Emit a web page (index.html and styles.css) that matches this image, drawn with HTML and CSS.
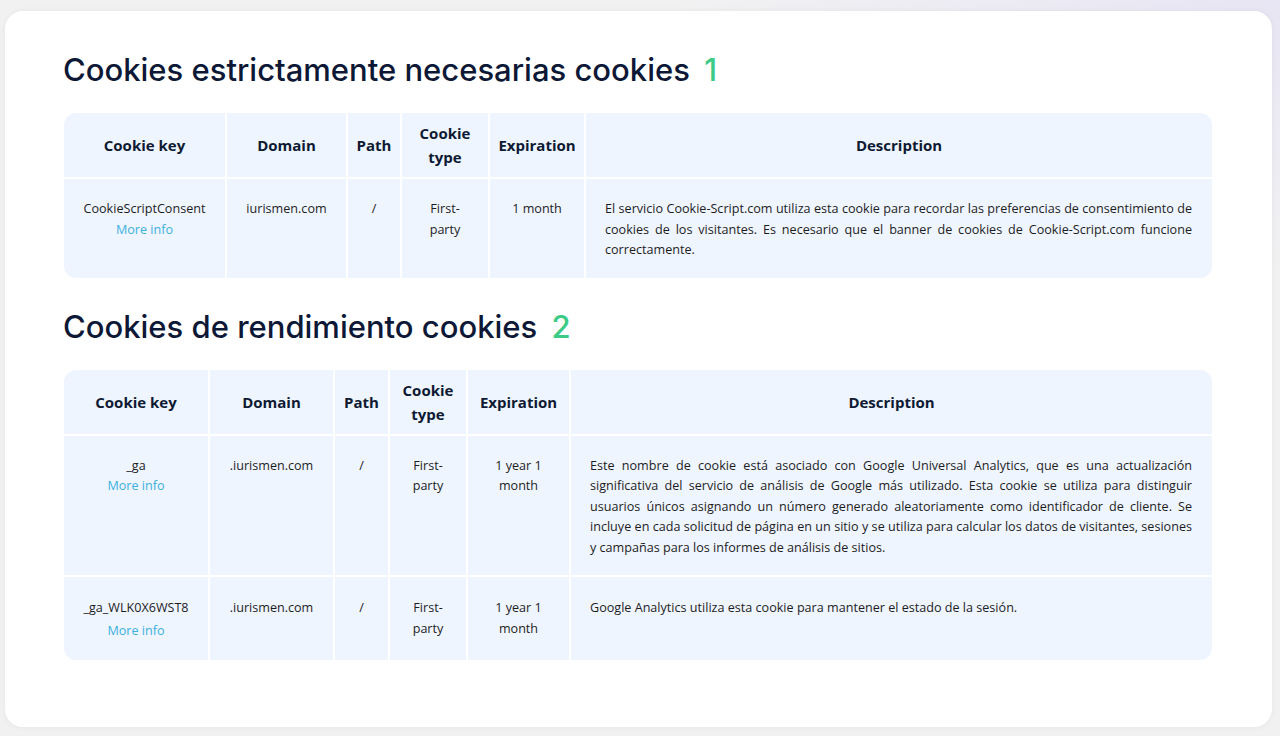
FILE: index.html
```html
<!DOCTYPE html>
<html lang="es">
<head>
<meta charset="utf-8">
<title>Cookies</title>
<link rel="stylesheet" href="styles.css">
</head>
<body>
<div class="page">
  <main class="card">
    <h2 class="section-title">Cookies estrictamente necesarias cookies <span class="count">1</span></h2>
    <table class="cookie-table t1">
      <colgroup>
        <col class="c-key"><col class="c-domain"><col class="c-path"><col class="c-type"><col class="c-exp"><col class="c-desc">
      </colgroup>
      <thead>
        <tr><th>Cookie key</th><th>Domain</th><th>Path</th><th>Cookie type</th><th>Expiration</th><th>Description</th></tr>
      </thead>
      <tbody>
        <tr>
          <td class="key">CookieScriptConsent<a class="more" href="#">More info</a></td>
          <td>iurismen.com</td>
          <td>/</td>
          <td>First-party</td>
          <td>1 month</td>
          <td class="desc">El servicio Cookie-Script.com utiliza esta cookie para recordar las preferencias de consentimiento de cookies de los visitantes. Es necesario que el banner de cookies de Cookie-Script.com funcione correctamente.</td>
        </tr>
      </tbody>
    </table>

    <h2 class="section-title">Cookies de rendimiento cookies <span class="count">2</span></h2>
    <table class="cookie-table t2">
      <colgroup>
        <col class="c-key"><col class="c-domain"><col class="c-path"><col class="c-type"><col class="c-exp"><col class="c-desc">
      </colgroup>
      <thead>
        <tr><th>Cookie key</th><th>Domain</th><th>Path</th><th>Cookie type</th><th>Expiration</th><th>Description</th></tr>
      </thead>
      <tbody>
        <tr>
          <td class="key">_ga<a class="more" href="#">More info</a></td>
          <td>.iurismen.com</td>
          <td>/</td>
          <td>First-party</td>
          <td>1 year 1 month</td>
          <td class="desc">Este nombre de cookie está asociado con Google Universal Analytics, que es una actualización significativa del servicio de análisis de Google más utilizado. Esta cookie se utiliza para distinguir usuarios únicos asignando un número generado aleatoriamente como identificador de cliente. Se incluye en cada solicitud de página en un sitio y se utiliza para calcular los datos de visitantes, sesiones y campañas para los informes de análisis de sitios.</td>
        </tr>
        <tr class="last">
          <td class="key">_ga_WLK0X6WST8<a class="more" href="#">More info</a></td>
          <td>.iurismen.com</td>
          <td>/</td>
          <td>First-party</td>
          <td>1 year 1 month</td>
          <td class="desc">Google Analytics utiliza esta cookie para mantener el estado de la sesión.</td>
        </tr>
      </tbody>
    </table>
  </main>
</div>
</body>
</html>
```

FILE: styles.css
```css
* { box-sizing: border-box; }

html, body {
  margin: 0;
  height: 100%;
}

body {
  background:
    radial-gradient(ellipse 600px 260px at 100% 0%, #e8e5f4 0%, rgba(232,229,244,0) 100%),
    #f1f1f2;
  font-family: "Open Sans", "Liberation Sans", sans-serif;
  overflow: hidden;
}

.page {
  padding: 11px 8px 9px 5px;
  height: 736px;
}

.card {
  background: #ffffff;
  border-radius: 18px;
  height: 716px;
  padding: 39px 60px 0 59px;
  box-shadow: 0 0 6px rgba(0, 0, 0, 0.05);
}

.section-title {
  font-family: Inter, "Noto Sans", sans-serif;
  font-weight: 500;
  font-size: 31px;
  line-height: 40px;
  color: #0d1836;
  margin: 29px 0 23px -1px;
}

.section-title:first-child { margin-top: 0; margin-bottom: 23px; }

.count {
  color: #3ccb87;
  margin-left: 6px;
}

.cookie-table {
  width: 1148px;
  table-layout: fixed;
  border-collapse: separate;
  border-spacing: 0;
}

.t1 .c-key { width: 161px; }
.t1 .c-domain { width: 121px; }
.t1 .c-path { width: 54px; }
.t1 .c-type { width: 88px; }
.t1 .c-exp { width: 96px; }
.t1 .c-desc { width: 628px; }

.t2 .c-key { width: 144px; }
.t2 .c-domain { width: 125px; }
.t2 .c-path { width: 55px; }
.t2 .c-type { width: 78px; }
.t2 .c-exp { width: 103px; }
.t2 .c-desc { width: 643px; }

.cookie-table th,
.cookie-table td {
  background: #eff5fe;
  border-left: 2px solid #ffffff;
  border-top: 2px solid #ffffff;
}

.cookie-table th:first-child,
.cookie-table td:first-child { border-left: 0; }

.cookie-table thead th { border-top: 0; }

.cookie-table th {
  height: 64px;
  padding: 8px 6px;
  font-size: 15px;
  line-height: 24px;
  font-weight: 700;
  color: #0e1a33;
  text-align: center;
  vertical-align: middle;
}

.cookie-table td {
  padding: 20px 16px 17px;
  font-size: 12.6px;
  line-height: 20.5px;
  color: #1d1d1f;
  text-align: center;
  vertical-align: top;
}

.cookie-table td.desc {
  text-align: justify;
  padding: 20px 20px 17px 19px;
}

.cookie-table tr.last td {
  padding-top: 21px;
  padding-bottom: 19px;
}

.more {
  display: block;
  color: #3bb0de;
  text-decoration: none;
}

.t2 tbody tr.last .more { margin-top: 2px; }

.cookie-table thead tr th:first-child { border-top-left-radius: 12px; }
.cookie-table thead tr th:last-child { border-top-right-radius: 12px; }
.cookie-table tbody tr:last-child td:first-child { border-bottom-left-radius: 12px; }
.cookie-table tbody tr:last-child td:last-child { border-bottom-right-radius: 12px; }
```
